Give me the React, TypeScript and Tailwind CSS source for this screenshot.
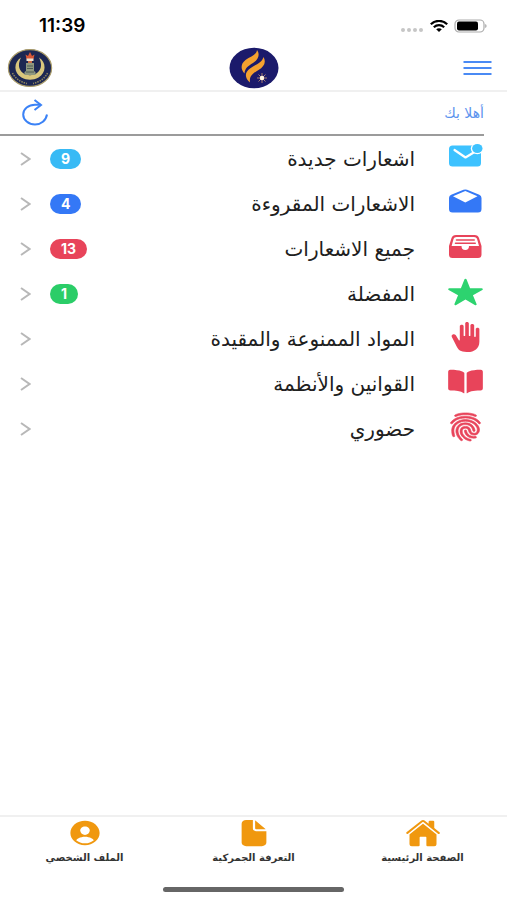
import type { ReactNode } from "react";
import type { IconType } from "react-icons";
import {
  IoBook,
  IoDocument,
  IoFingerPrint,
  IoHandRight,
  IoHome,
  IoPersonCircle,
  IoStar,
} from "react-icons/io5";

function ListIcon({ children }: { children: ReactNode }) {
  return (
    <svg viewBox="0 0 37 30" className="h-[30px] w-[37px]" fill="currentColor" aria-hidden="true">
      {children}
    </svg>
  );
}

function Glyph({ icon: Icon, weight = 0 }: { icon: IconType; weight?: number }) {
  return (
    <Icon
      className="h-[30px] w-[37px]"
      preserveAspectRatio="none"
      strokeWidth={weight}
      aria-hidden="true"
    />
  );
}

function NewMailIcon() {
  return (
    <ListIcon>
      <rect x="2" y="3.500" width="32" height="21" rx="3.500" />
      <path d="M7.500 8L18.500 15.500L27.500 10" fill="none" stroke="#fff" strokeWidth="2.200" strokeLinecap="round" strokeLinejoin="round" />
      <ellipse cx="30.300" cy="6.500" rx="6.500" ry="5.800" fill="#fff" />
      <ellipse cx="30.300" cy="6.500" rx="5.200" ry="4.500" />
    </ListIcon>
  );
}

function OpenMailIcon() {
  return (
    <ListIcon>
      <path
        fillRule="evenodd"
        d="M2 11Q2 8.800 4.200 7.800L16.500 2.800Q18.300 2 20.100 2.800L32.300 7.800Q34.500 8.800 34.500 11V22Q34.500 25.500 31 25.500H5.500Q2 25.500 2 22ZM6 9.300L18.300 15.500L30.500 9.300L18.300 4Z"
      />
    </ListIcon>
  );
}

function TrayIcon() {
  return (
    <ListIcon>
      <path
        fillRule="evenodd"
        d="M9 3H27.500Q31 3 32 6L34.500 14V22.500Q34.500 26 31 26H5.500Q2 26 2 22.500V14L4.500 6Q5.500 3 9 3ZM9.500 5Q7.200 5 6.600 6.800L4.600 14H14.500Q14.500 18 18.300 18Q22 18 22 14H32L30 6.800Q29.300 5 27 5Z"
      />
      <path d="M9.500 8H27.200M8.500 11.300H28.200" stroke="currentColor" strokeWidth="1.600" strokeLinecap="round" />
    </ListIcon>
  );
}

type Row = {
  label: string;
  icon: ReactNode;
  color: string;
  count?: number;
  badge?: string;
};

const rows: Row[] = [
  { label: "اشعارات جديدة", icon: <NewMailIcon />, color: "text-[#3dc2ff]", count: 9, badge: "bg-[#38baf5]" },
  { label: "الاشعارات المقروءة", icon: <OpenMailIcon />, color: "text-[#3478f6]", count: 4, badge: "bg-[#3478f6]" },
  { label: "جميع الاشعارات", icon: <TrayIcon />, color: "text-[#e8445a]", count: 13, badge: "bg-[#e8445a]" },
  { label: "المفضلة", icon: <Glyph icon={IoStar} />, color: "text-[#2dd36f]", count: 1, badge: "bg-[#2bcd68]" },
  { label: "المواد الممنوعة والمقيدة", icon: <Glyph icon={IoHandRight} />, color: "text-[#e8445a]" },
  { label: "القوانين والأنظمة", icon: <Glyph icon={IoBook} />, color: "text-[#e8445a]" },
  { label: "حضوري", icon: <Glyph icon={IoFingerPrint} weight={10} />, color: "text-[#e8445a]" },
];

const tabs: { label: string; icon: IconType }[] = [
  { label: "الصفحة الرئيسية", icon: IoHome },
  { label: "التعرفة الجمركية", icon: IoDocument },
  { label: "الملف الشخصي", icon: IoPersonCircle },
];

function StatusBar() {
  return (
    <div dir="ltr" className="flex h-[46px] items-center justify-between pt-[6px] pr-[20px] pl-[39px]">
      <span className="font-[Inter,sans-serif] text-[19px] leading-5 font-semibold text-black">11:39</span>
      <div className="flex items-center gap-[6px]">
        <svg width="24" height="14" viewBox="0 0 24 14" fill="#c6c6c6" aria-hidden="true">
          <circle cx="3" cy="11" r="2" />
          <circle cx="9" cy="11" r="2" />
          <circle cx="15" cy="11" r="2" />
          <circle cx="21" cy="11" r="2" />
        </svg>
        <svg width="18" height="12" viewBox="0 0 18 12" fill="none" stroke="#000" strokeWidth="2.200" aria-hidden="true">
          <path d="M0.800 4.200C5.300 -0.200 12.700 -0.200 17.200 4.200" />
          <path d="M3.800 7.200C6.800 4.400 11.200 4.400 14.200 7.200" />
          <path d="M6.200 9.200L9 11.900L11.800 9.200C10.200 7.900 7.800 7.900 6.200 9.200Z" fill="#000" stroke="none" />
        </svg>
        <svg width="33" height="14" viewBox="0 0 33 14" aria-hidden="true">
          <rect x="1" y="1" width="29" height="12" rx="4" fill="#fff" stroke="#ababab" strokeWidth="1.200" />
          <rect x="3" y="2.600" width="21" height="9" rx="2" fill="#000" />
          <path d="M31.300 5v4c1.600-.7 1.600-3.300 0-4Z" fill="#999" />
        </svg>
      </div>
    </div>
  );
}

function Crest() {
  return (
    <svg width="46" height="40" viewBox="0 0 46 40" role="img" aria-label="شعار الجمارك">
      <ellipse cx="23" cy="20" rx="21.600" ry="18.400" fill="#1d2752" stroke="#a89a68" strokeWidth="1.200" />
      <path
        d="M14 9.500C6.500 14 6.500 25 14.500 29.500C20 32.500 26 32.500 31.500 29.500C39.500 25 39.500 14 32 9.500C35 15.500 35 21 30 25C26 28 20 28 16 25C11 21 11 15.500 14 9.500Z"
        fill="#d9c67c"
      />
      <path d="M19 15h8v8l1.500 1v3H17.500v-3l1.500-1Z" fill="#8f987f" />
      <path d="M20 18h6M20 20.500h6M19 24h8" stroke="#4f5b55" strokeWidth="1" />
      <path d="M18.500 6.500L21 8l2-4 2 4 2.500-1.500L26.500 11h-7Z" fill="#d85736" />
      <path d="M19.500 10.500h7v2.500h-7Z" fill="#eee2d0" />
      <path d="M21 13h4v2h-4Z" fill="#c86a43" />
      <path d="M5.500 25C8 30 13 34 20 35.500M40.500 25C38 30 33 34 26 35.500" fill="none" stroke="#8d845f" strokeWidth="1.600" strokeDasharray="1.500 1" />
    </svg>
  );
}

function FlameLogo() {
  return (
    <svg width="50" height="42" viewBox="0 0 50 42" role="img" aria-label="الشعار">
      <ellipse cx="25" cy="21" rx="24.500" ry="20.300" fill="#1b1a6b" />
      <path d="M28 3C31.500 8 29 12.500 24 16C19 19 16 21 15.500 26.500C11.500 22 11.500 17 16.500 13C21.500 9.500 27.500 8 28 3Z" fill="#f5a12f" />
      <path d="M34.500 10C37.500 15.500 35 19.500 29.500 23C24.500 26 20 28.500 21 35.500C15.500 30.500 15.500 25.500 21 21.500C26.500 17.500 33 16 34.500 10Z" fill="#f5a12f" />
      <path d="M33 26v10M28 31h10M29.500 27.500l7 7M36.500 27.500l-7 7" stroke="#b88970" strokeWidth="0.900" />
      <circle cx="33" cy="31" r="2.200" fill="#fff4e4" />
    </svg>
  );
}

export default function App() {
  return (
    <div
      dir="rtl"
      className="flex min-h-screen w-full flex-col bg-white font-['DejaVu_Sans','Noto_Sans',sans-serif] text-[#202020]"
    >
      <StatusBar />

      <header className="grid h-[46px] grid-cols-3 items-center border-b-2 border-[#f0f0f0] px-[7px]">
        <button type="button" aria-label="القائمة" className="mr-2 justify-self-start text-[#4a8af4]">
          <svg width="29" height="16" viewBox="0 0 29 16" fill="none" stroke="currentColor" strokeWidth="2" aria-hidden="true">
            <path d="M0.500 2h28M0.500 8h28M0.500 14h28" />
          </svg>
        </button>
        <div className="justify-self-center">
          <FlameLogo />
        </div>
        <div className="justify-self-end">
          <Crest />
        </div>
      </header>

      <main className="flex-1">
        <div className="mr-[23px] flex h-[44px] items-center justify-between border-b-2 border-[#9b9b9b] pl-[21px]">
          <h1 className="text-[14px] leading-4 text-[#5b93ee]">أهلا بك</h1>
          <button type="button" aria-label="تحديث" className="text-[#3b82f6]">
            <svg width="28" height="28" viewBox="0 0 28 28" fill="none" stroke="currentColor" strokeWidth="2" aria-hidden="true">
              <path d="M26 15.500C25 21.500 20 25.500 14 25.500C7.500 25.500 2.200 21 2.200 15.500C2.200 10 7.500 5.800 14 5.800H19.500" />
              <path d="M13.500 1L20 6L13.500 11" />
            </svg>
          </button>
        </div>

        <ul>
          {rows.map(({ label, icon, color, count, badge }) => (
            <li key={label}>
              <a href="#" className="flex h-[45px] items-center pr-[23px] pl-[20px]">
                <span className={`mb-1 ml-[32px] ${color}`}>{icon}</span>
                <span className="flex-1 text-[20px] leading-6">{label}</span>
                <span dir="ltr" className="flex items-center gap-[19px]">
                  <svg width="11" height="14" viewBox="0 0 11 14" fill="none" stroke="#b8b8b8" strokeWidth="2" aria-hidden="true">
                    <path d="M1 1L9.500 7L1 13" />
                  </svg>
                  {count !== undefined && (
                    <span
                      className={`rounded-full px-[11px] font-[Inter,sans-serif] text-[14px] leading-5 font-bold text-white ${badge}`}
                    >
                      {count}
                    </span>
                  )}
                </span>
              </a>
            </li>
          ))}
        </ul>
      </main>

      <nav className="grid h-[64px] grid-cols-3 border-t-2 border-[#f0f0f0] pt-px">
        {tabs.map(({ label, icon: Icon }) => (
          <a key={label} href="#" className="flex flex-col items-center text-[#f0980f]">
            <Icon className="h-[30px] w-[36px]" preserveAspectRatio="none" aria-hidden="true" />
            <span className="text-[10px] leading-5 font-bold text-[#333333]">{label}</span>
          </a>
        ))}
      </nav>
      <div className="flex h-[21px] items-center justify-center">
        <div className="h-[5px] w-[181px] rounded-full bg-[#666666]" />
      </div>
    </div>
  );
}
